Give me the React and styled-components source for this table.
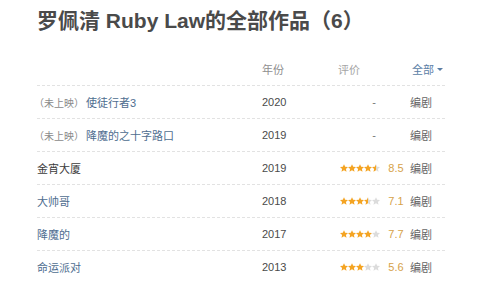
import styled, { createGlobalStyle } from 'styled-components';

const works = [
  { status: '（未上映）', title: '使徒行者3', link: true, year: 2020, score: null },
  { status: '（未上映）', title: '降魔的之十字路口', link: true, year: 2019, score: null },
  { title: '金宵大厦', link: false, year: 2019, score: 8.5, stars: 4.5 },
  { title: '大帅哥', link: true, year: 2018, score: 7.1, stars: 3.5 },
  { title: '降魔的', link: true, year: 2017, score: 7.7, stars: 4 },
  { title: '命运派对', link: true, year: 2013, score: 5.6, stars: 3 },
];

const STAR = 'M5 0l1.5 3.1 3.5 0.4-2.6 2.35 0.75 3.45L5 7.55 1.85 9.3l0.75-3.45L0 3.5l3.5-0.4z';

function Star({ fill, id }) {
  // fill: 1 full, 0.5 half, 0 empty
  return (
    <svg width="8" height="8" viewBox="0 0 10 9.5">
      {fill === 0.5 && (
        <defs>
          <linearGradient id={id}>
            <stop offset="50%" stopColor="#f4a423" />
            <stop offset="50%" stopColor="#dcdcdc" />
          </linearGradient>
        </defs>
      )}
      <path
        d={STAR}
        fill={fill === 1 ? '#f4a423' : fill === 0.5 ? `url(#${id})` : '#dcdcdc'}
      />
    </svg>
  );
}

function Stars({ value, rowKey }) {
  const list = [0, 1, 2, 3, 4].map((i) =>
    value >= i + 1 ? 1 : value >= i + 0.5 ? 0.5 : 0
  );
  return (
    <StarRow>
      {list.map((f, i) => (
        <Star key={i} fill={f} id={`half-${rowKey}-${i}`} />
      ))}
    </StarRow>
  );
}

export default function App() {
  return (
    <>
      <GlobalStyle />
      <Page>
        <Heading>罗佩清 Ruby Law的全部作品（6）</Heading>
        <Table>
          <HeadRow>
            <span />
            <HeadCell>年份</HeadCell>
            <HeadCell $light>评价</HeadCell>
            <Filter>
              全部<Caret />
            </Filter>
          </HeadRow>
          {works.map((w, i) => (
            <Row key={i} $last={i === works.length - 1}>
              <TitleCell>
                {w.status && <Status>{w.status}</Status>}
                <WorkTitle $link={w.link}>{w.title}</WorkTitle>
              </TitleCell>
              <Year>{w.year}</Year>
              <Rating>
                {w.score === null ? (
                  <Dash>-</Dash>
                ) : (
                  <>
                    <Stars value={w.stars} rowKey={i} />
                    <Score>{w.score}</Score>
                  </>
                )}
              </Rating>
              <Role>编剧</Role>
            </Row>
          ))}
        </Table>
      </Page>
    </>
  );
}

const GlobalStyle = createGlobalStyle`
  html, body {
    margin: 0;
    background: #fff;
  }
  body {
    font-family: "Liberation Sans", "Noto Sans CJK SC", sans-serif;
    font-size: 11px;
    color: #444;
  }
`;

const Page = styled.div`
  width: 500px;
  height: 294px;
  padding-left: 37px;
  box-sizing: border-box;
  overflow: hidden;
`;

const Heading = styled.h1`
  margin: 0;
  padding-top: 7px;
  height: 46px;
  box-sizing: border-box;
  line-height: 28px;
  font-size: 21px;
  font-weight: bold;
  color: #4a4a4a;
`;

const Table = styled.div`
  width: 408px;
`;

const gridCols = `
  display: grid;
  grid-template-columns: 225px 76px 72px 1fr;
  align-items: center;
  height: 33px;
  box-sizing: border-box;
  border-bottom: 1px dashed #e2e2e2;
`;

const HeadRow = styled.div`
  ${gridCols}
  margin-top: 7px;
`;

const HeadCell = styled.span`
  color: ${({ $light }) => ($light ? '#a5a5a5' : '#8f8f8f')};
  font-size: 11px;
`;

const Filter = styled.span`
  display: inline-flex;
  align-items: center;
  padding-left: 2px;
  color: #5a7ea6;
  font-size: 11px;
`;

const Caret = styled.i`
  width: 0;
  height: 0;
  margin-left: 3px;
  border-left: 3px solid transparent;
  border-right: 3px solid transparent;
  border-top: 3px solid #5a7ea6;
`;

const Row = styled.div`
  ${gridCols}
  border-bottom-color: ${({ $last }) => ($last ? 'transparent' : '#e2e2e2')};
`;

const TitleCell = styled.div`
  display: flex;
  align-items: center;
  white-space: nowrap;
`;

const Status = styled.span`
  color: #8a8a8a;
  font-size: 10px;
  margin-left: -3px;
  margin-right: 2px;
`;

const WorkTitle = styled.span`
  color: ${({ $link }) => ($link ? '#4e6d8f' : '#3c3c3c')};
  font-size: 11px;
`;

const Year = styled.span`
  color: #4a4a4a;
  font-size: 11px;
`;

const Rating = styled.div`
  display: flex;
  align-items: center;
  justify-content: center;
  gap: 8px;
  padding-right: 4px;
`;

const StarRow = styled.span`
  display: inline-flex;
  gap: 0;
`;

const Score = styled.span`
  color: #d6a24a;
  font-size: 11px;
`;

const Dash = styled.span`
  color: #777;
  margin-left: 4px;
`;

const Role = styled.span`
  color: #666;
  font-size: 11px;
`;
